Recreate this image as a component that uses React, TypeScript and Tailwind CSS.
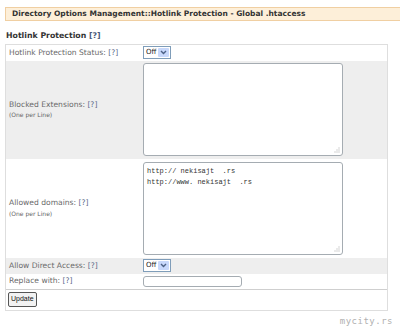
import React from "react";

const label = "text-[7.6px] leading-none text-[#6a6a6a]";
const help = "text-[#5a6a8a]";

function OffSelect() {
  return (
    <div className="flex h-[13px] w-[28px] items-stretch border border-[#7f9db9] bg-white">
      <span className="flex flex-1 items-center pl-[2px] text-[7px] text-[#222]">Off</span>
      <span className="m-[1px] flex w-[11px] items-center justify-center rounded-[1px] bg-[#c8d8fb]">
        <svg width="7" height="5" viewBox="0 0 7 5">
          <path d="M1 1 L3.5 3.5 L6 1" fill="none" stroke="#4d6185" strokeWidth="1.4" />
        </svg>
      </span>
    </div>
  );
}

function Area({ lines }: { lines?: string[] }) {
  return (
    <div className="relative h-[93px] w-[200px] rounded-[3px] border border-[#a5acb2] bg-white px-[3px] py-[3px] font-['Liberation_Mono',monospace] text-[7px] leading-[11px] text-[#333]">
      {lines?.map((l) => (
        <div key={l} className="whitespace-pre">{l}</div>
      ))}
      <svg className="absolute bottom-[2px] right-[2px]" width="6" height="6" viewBox="0 0 6 6">
        <path d="M5 1v0M5 3v0M3 3v0M5 5v0M3 5v0M1 5v0" stroke="#aaa" strokeWidth="1" strokeLinecap="square" />
      </svg>
    </div>
  );
}

export default function App() {
  return (
    <div className="h-[327px] w-[400px] overflow-hidden bg-white font-['DejaVu_Sans',Verdana,sans-serif]">
      <div className="ml-[5px] mt-[7px] flex h-[14px] items-center border-y border-l border-[#f0cfa2] bg-[#fdefd9] pl-[6px] text-[7.5px] font-bold text-[#333]">
        Directory Options Management::Hotlink Protection - Global .htaccess
      </div>
      <div className="ml-[6px] mt-[9px] text-[7.8px] font-bold text-[#333]">
        Hotlink Protection <span className="text-[#4a5a7a]">[?]</span>
      </div>
      <div className="ml-[5px] mt-[2px] w-[383px] border border-[#dedede]">
        <div className="flex h-[16px] items-center bg-white">
          <div className={`w-[137px] pl-[3px] ${label}`}>
            Hotlink Protection Status: <span className={help}>[?]</span>
          </div>
          <OffSelect />
        </div>
        <div className="flex h-[98px] items-center bg-[#eeeeee]">
          <div className="w-[137px] pl-[3px]">
            <div className={label}>
              Blocked Extensions: <span className={help}>[?]</span>
            </div>
            <div className="mt-[4px] text-[6px] leading-none text-[#666]">(One per Line)</div>
          </div>
          <Area />
        </div>
        <div className="flex h-[99px] items-center bg-white">
          <div className="w-[137px] pl-[3px]">
            <div className={label}>
              Allowed domains: <span className={help}>[?]</span>
            </div>
            <div className="mt-[4px] text-[6px] leading-none text-[#666]">(One per Line)</div>
          </div>
          <Area lines={["http:// nekisajt  .rs", "http://www. nekisajt  .rs"]} />
        </div>
        <div className="flex h-[16px] items-center bg-[#eeeeee]">
          <div className={`w-[137px] pl-[3px] ${label}`}>
            Allow Direct Access: <span className={help}>[?]</span>
          </div>
          <OffSelect />
        </div>
        <div className="flex h-[16px] items-center border-b border-[#cfcfcf] bg-white">
          <div className={`w-[137px] pl-[3px] ${label}`}>
            Replace with: <span className={help}>[?]</span>
          </div>
          <div className="h-[11px] w-[99px] rounded-[3px] border border-[#a5acb2] bg-white" />
        </div>
        <div className="flex h-[20px] items-center pl-[2px]">
          <button className="h-[15px] rounded-[2px] border border-[#555] bg-[#f2f2f2] px-[2px] font-['Liberation_Sans',Arial,sans-serif] text-[7px] text-[#111]">
            Update
          </button>
        </div>
      </div>
      <div className="mr-[7px] mt-[4px] text-right font-['DejaVu_Sans_Mono',monospace] text-[9px] tracking-[0.5px] text-[#b0b0b0]">
        mycity.rs
      </div>
    </div>
  );
}
